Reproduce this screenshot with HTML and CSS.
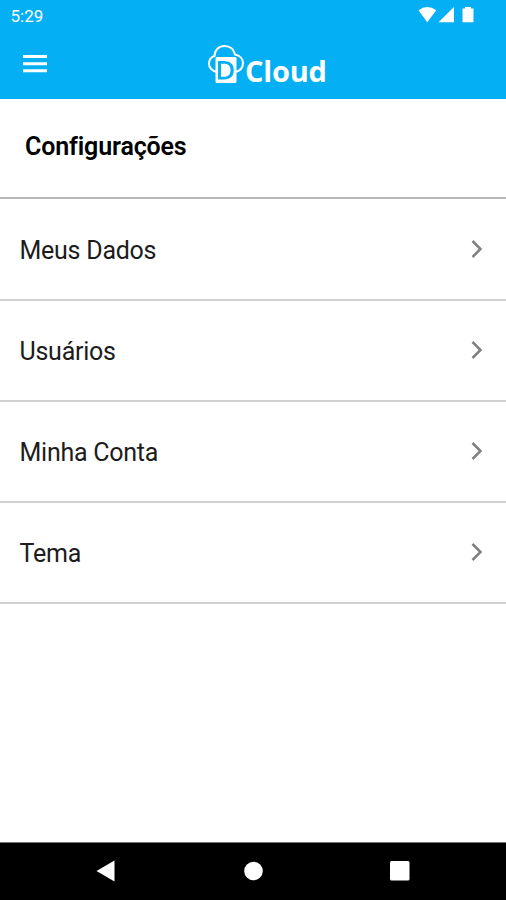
FILE: index.html
```html
<!DOCTYPE html>
<html lang="pt-BR">
<head>
<meta charset="utf-8">
<title>Configurações</title>
<link rel="stylesheet" href="styles.css">
</head>
<body>
<header class="top">
  <div class="status">
    <span class="time">5:29</span>
    <svg class="signals" width="58" height="18" viewBox="0 0 58 18" fill="#fff">
      <path d="M0.5 3.2Q9.3-3 18.2 3.2L9.3 15.3Z" transform="translate(0 1)"/>
      <path d="M20.5 16.3L36 1V16.3Z"/>
      <path d="M47 1H53V2.5H55.5V16.3H44.5V2.5H47Z"/>
    </svg>
  </div>
  <div class="bar">
    <svg class="menu" width="24" height="18" viewBox="0 0 24 18" fill="#fff"><path d="M0 0H24V3H0ZM0 7.2H24V10.2H0ZM0 14.2H24V17.2H0Z"/></svg>
    <div class="logo">
      <svg class="mark" width="38" height="40" viewBox="0 0 38 40">
        <path d="M10 28C5 27 2 23.500 2 20C2 16 4.500 13 7.500 12C7.500 6 12 2 17.500 2C23 2 27 5.500 28 10.500C33 11.500 36 15 36 19C36 23.500 33 27 28 28" fill="none" stroke="#fff" stroke-width="2"/>
        <rect x="8.500" y="13" width="21" height="26" rx="1.500" fill="#fff"/>
        <path fill-rule="evenodd" fill="#05aff3" d="M11 17H17C23.500 17 26.800 20.500 26.800 26C26.800 32 23.500 35.500 17 35.500H11ZM14 19.700V32.800H17C21.500 32.800 23.500 30.500 23.500 26C23.500 21.800 21.500 19.700 17 19.700Z"/>
      </svg>
      <span class="brand">Cloud</span>
    </div>
  </div>
</header>
<main>
  <h1>Configurações</h1>
  <ul class="list">
    <li><span>Meus Dados</span><svg class="chevron" width="12" height="18" viewBox="0 0 12 18"><path d="M1.500 1L9.500 9L1.500 17"/></svg></li>
    <li><span>Usuários</span><svg class="chevron" width="12" height="18" viewBox="0 0 12 18"><path d="M1.500 1L9.500 9L1.500 17"/></svg></li>
    <li><span>Minha Conta</span><svg class="chevron" width="12" height="18" viewBox="0 0 12 18"><path d="M1.500 1L9.500 9L1.500 17"/></svg></li>
    <li><span>Tema</span><svg class="chevron" width="12" height="18" viewBox="0 0 12 18"><path d="M1.500 1L9.500 9L1.500 17"/></svg></li>
  </ul>
</main>
<nav class="navbar">
  <svg width="20" height="22" viewBox="0 0 20 22"><path d="M0.500 11L18.500 0.500V21.500Z"/></svg>
  <svg width="20" height="20" viewBox="0 0 20 20"><circle cx="10.500" cy="10" r="9.300"/></svg>
  <svg width="20" height="20" viewBox="0 0 20 20"><rect width="19.500" height="19.500" rx="1.500"/></svg>
</nav>
</body>
</html>
```
FILE: styles.css
```css
* { box-sizing: border-box; }
body {
  margin: 0;
  height: 900px;
  display: flex;
  flex-direction: column;
  background: #fff;
  color: #1c1c1c;
  font-family: Roboto, "Liberation Sans", sans-serif;
}
.top { height: 98.5px; background: #05aff3; color: #fff; }
.status {
  height: 32px;
  padding: 0 30.5px 0 10.5px;
  display: flex;
  justify-content: space-between;
  align-items: center;
}
.time { font-size: 17px; }
.signals { margin-bottom: 2px; }
.bar { height: 66px; display: grid; grid-template-columns: 184px 1fr; padding-left: 23px; }
.menu { margin-top: 23px; }
.logo { display: flex; align-items: flex-start; padding-top: 12px; }
.mark { flex: none; }
.brand {
  font: 700 29px/34px "Open Sans", sans-serif;
  letter-spacing: -0.2px;
  margin-top: 10px;
}
main { flex: 1; }
h1 {
  margin: 0;
  height: 100.5px;
  padding: 32px 25px 0;
  border-bottom: 2px solid #b8b8b8;
  font-size: 25px;
  line-height: 32px;
  letter-spacing: -0.15px;
  font-weight: 600;
  color: #000;
}
.list { margin: 0; padding: 0.7px 0 0; list-style: none; }
.list li {
  height: 101.15px;
  padding: 0 23px 0 19.5px;
  border-bottom: 2px solid #d2d2d2;
  display: flex;
  justify-content: space-between;
  align-items: center;
  font-size: 25px;
}
.list span { padding-top: 2px; letter-spacing: -0.25px; }
.chevron { fill: none; stroke: #808080; stroke-width: 2.5; margin-bottom: 0.5px; }
.navbar {
  height: 58.5px;
  background: #000;
  border-top: 1px solid #777;
  display: flex;
  justify-content: space-between;
  align-items: center;
  padding: 0 96px 1px;
}
.navbar svg { fill: #fff; }
```
